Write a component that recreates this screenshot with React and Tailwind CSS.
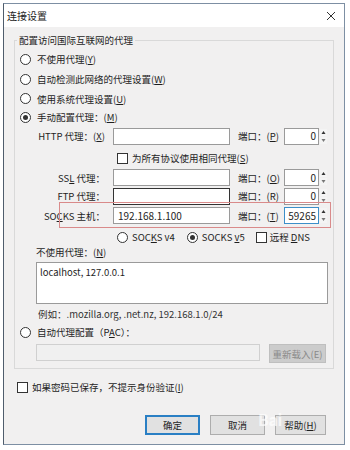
import React from 'react'

const font = { fontFamily: '"Noto Sans CJK SC", "Noto Sans", sans-serif' }

function Radio({ checked }) {
    return (
        <span className="w-[11px] h-[11px] rounded-full border border-[#333] bg-white flex items-center justify-center shrink-0">
            {checked && <span className="w-[5px] h-[5px] rounded-full bg-[#333]" />}
        </span>
    )
}

function Check() {
    return <span className="block w-[11px] h-[11px] border border-[#333] bg-white shrink-0" />
}

function Spin() {
    return (
        <span className="w-[7px] h-[17px] ml-[1px] flex flex-col justify-between py-[1px]">
            <svg width="7" height="7" viewBox="0 0 7 7"><rect x="0" y="0" width="7" height="7" fill="#f4f4f4" /><path d="M1.5 5 L3.5 2 L5.5 5 Z" fill="#333" /></svg>
            <svg width="7" height="7" viewBox="0 0 7 7"><rect x="0" y="0" width="7" height="7" fill="#f4f4f4" /><path d="M1.5 2 L3.5 5 L5.5 2 Z" fill="#777" /></svg>
        </span>
    )
}

function ProxyRow({ label, value = '', port = '0', portLabel, h, mt, inputCls = 'border-[#9a9a9a]', portCls = 'border-[#9a9a9a]' }) {
    return (
        <div className={`flex items-center ${h} ${mt}`}>
            <span className="w-[90px] text-right whitespace-nowrap">{label}</span>
            <div className={`ml-[8px] w-[117px] h-[17px] bg-white border ${inputCls} px-[4px] flex items-center text-[10px]`}>{value}</div>
            <span className="ml-[8px] w-[42px] whitespace-nowrap">{portLabel}</span>
            <div className={`ml-[4px] w-[35px] h-[17px] bg-white border ${portCls} px-[2px] flex items-center justify-end text-[10px]`}>{port}</div>
            <Spin />
        </div>
    )
}

export default function App() {
    return (
        <div className="w-[350px] h-[450px] bg-white pt-[3px] pl-[3px] text-[9.5px] leading-[12px] text-[#1e1e1e]" style={font}>
            <div className="relative w-[342px] h-[442px] border border-[#7d8fa3] border-l-[#4f5d6c] bg-[#f1f0f0] flex flex-col">
                {/* title bar */}
                <div className="h-[23px] bg-white flex items-center justify-between pl-[3px] pr-[8px] shrink-0">
                    <span className="text-[10px] text-[#222]">连接设置</span>
                    <svg width="10" height="10" viewBox="0 0 10 10"><path d="M1 1 L9 9 M9 1 L1 9" stroke="#333" strokeWidth="1" /></svg>
                </div>

                <div className="flex-1 px-[10px] pt-[7px] flex flex-col">
                    <fieldset className="border border-[#d9d9d9] pb-[5px]">
                        <legend className="ml-[2px] px-[2px]">配置访问国际互联网的代理</legend>

                        <div className="flex items-center h-[20px] mt-[3px] pl-[5px] gap-[6px]"><Radio /><span>不使用代理(<u>Y</u>)</span></div>
                        <div className="flex items-center h-[20px] pl-[5px] gap-[6px]"><Radio /><span>自动检测此网络的代理设置(<u>W</u>)</span></div>
                        <div className="flex items-center h-[19px] pl-[5px] gap-[6px]"><Radio /><span>使用系统代理设置(<u>U</u>)</span></div>
                        <div className="flex items-center h-[18px] pl-[5px] gap-[6px]"><Radio checked /><span>手动配置代理：(<u>M</u>)</span></div>

                        <ProxyRow label={<>HTTP 代理：(<u>X</u>)</>} portLabel={<>端口：(<u>P</u>)</>} h="h-[18px]" mt="mt-[1px]" />

                        <div className="flex items-center h-[18px] mt-[4px] pl-[102px] gap-[4px]"><Check /><span>为所有协议使用相同代理(<u>S</u>)</span></div>

                        <ProxyRow label={<>SS<u>L</u> 代理：</>} portLabel={<>端口：(<u>O</u>)</>} h="h-[19px]" mt="mt-[1px]" />
                        <ProxyRow label={<>FTP 代理：</>} portLabel={<>端口：(R)</>} h="h-[18px]" mt="" inputCls="border-[#333]" />
                        <ProxyRow label={<>SO<u>C</u>KS 主机：</>} value="192.168.1.100" port="59265" portLabel={<>端口：(<u>T</u>)</>} h="h-[19px]" mt="mt-[1px]" portCls="border-[#3c8fc9]" />

                        <div className="flex items-center h-[16px] mt-[4px] pl-[102px]">
                            <Radio /><span className="ml-[4px]">SOC<u>K</u>S v4</span>
                            <span className="ml-[12px]"><Radio checked /></span><span className="ml-[4px]">SOCKS <u>v</u>5</span>
                            <span className="ml-[11px]"><Check /></span><span className="ml-[3px]">远程 <u>D</u>NS</span>
                        </div>

                        <div className="flex items-center h-[14px] pl-[21px]">不使用代理：(<u>N</u>)</div>
                        <div className="ml-[21px] mt-[3px] w-[292px] h-[42px] bg-white border border-[#9a9a9a] px-[3px] pt-[3px] text-[9.5px]">localhost, 127.0.0.1</div>
                        <div className="flex items-center h-[14px] mt-[3px] pl-[23px] text-[#333]">例如：.mozilla.org, .net.nz, 192.168.1.0/24</div>

                        <div className="flex items-center h-[16px] mt-[3px] pl-[5px] gap-[6px]"><Radio /><span>自动代理配置（P<u>A</u>C）：</span></div>
                        <div className="flex items-start h-[19px] mt-[4px] pl-[21px]">
                            <div className="w-[224px] h-[17px] bg-[#f0f0f0] border border-[#d0d0d0]" />
                            <div className="ml-[9px] w-[57px] h-[19px] bg-[#cccccc] border border-[#bfbfbf] flex items-center justify-center text-[#8a8a8a]">重新载入(E)</div>
                        </div>
                    </fieldset>

                    <div className="flex items-center h-[16px] mt-[10px] pl-[3px] gap-[4px]"><Check /><span>如果密码已保存，不提示身份验证(<u>I</u>)</span></div>

                    <div className="flex justify-end items-center mt-[20px] pr-[8px] gap-[10px]">
                        <div className="w-[55px] h-[20px] bg-[#e1e1e1] border-2 border-[#2a7fc4] flex items-center justify-center">确定</div>
                        <div className="w-[55px] h-[20px] bg-[#e1e1e1] border border-[#adadad] flex items-center justify-center">取消</div>
                        <div className="w-[51px] h-[20px] bg-[#e1e1e1] border border-[#adadad] flex items-center justify-center">帮助(<u>H</u>)</div>
                    </div>
                </div>

                {/* annotation box */}
                <div className="absolute left-[55px] top-[198px] w-[272px] h-[26px] border border-[#d98a8a]" />
                {/* watermark */}
                <div className="absolute left-[254px] top-[409px] text-[16px] font-bold text-white/70 tracking-tight">Bai</div>
            </div>
        </div>
    )
}
